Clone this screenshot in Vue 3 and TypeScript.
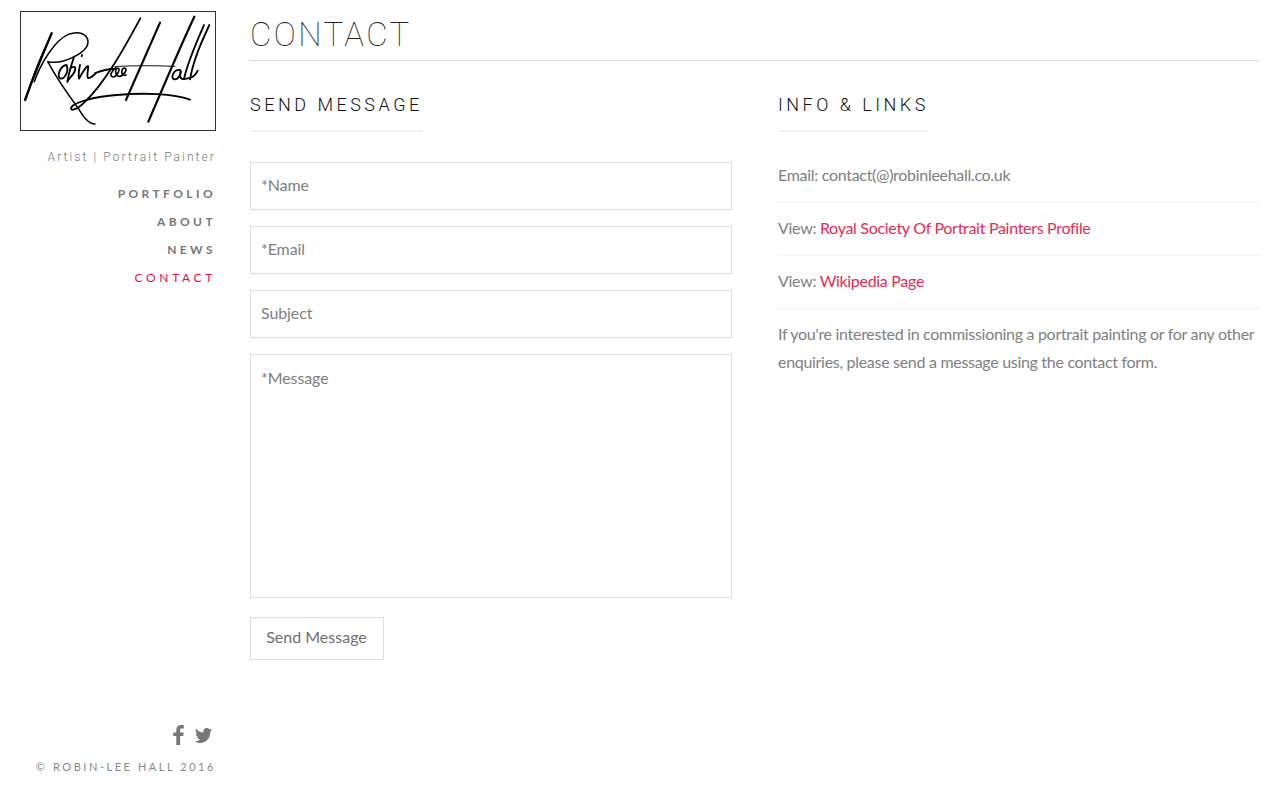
<template>
  <div class="page">
    <aside class="sidebar">
      <div class="logo">
        <svg class="signature" viewBox="63 36 582 354" width="194" height="118" fill="none" stroke="#000" stroke-linecap="round" stroke-linejoin="round">
          <!-- R -->
          <path stroke-width="7" d="M155 100C125 170 95 245 75 300" />
          <path stroke-width="5" d="M135 145C112 195 92 250 78 296" />
          <path stroke-width="4.5" d="M103 245C122 190 165 120 205 103C235 92 262 100 264 125C266 150 225 172 190 183C172 188 155 187 143 185C165 225 205 285 235 325C250 350 265 372 285 372" />
          <!-- obin -->
          <path stroke-width="5.5" d="M200 195C182 196 170 225 180 235C192 240 208 215 200 197M222 170C214 195 205 225 202 246C206 232 225 225 226 205C226 198 214 200 210 208M246 165L245 169M240 195C237 210 234 222 237 236C243 226 256 200 264 198C268 200 258 225 264 234C272 236 280 226 288 219" />
          <!-- dash and lee -->
          <path stroke-width="5.5" d="M286 219C305 212 322 206 342 207" />
          <path stroke-width="5" d="M348 203C334 214 326 230 340 231C352 228 362 208 354 204C342 206 346 231 360 229C372 226 384 208 374 204C362 206 362 230 378 225" />
          <path stroke-width="3.5" stroke="#444" d="M345 200C400 196 470 196 525 199" />
          <!-- L and flourish -->
          <path stroke-width="5.5" d="M421 55C375 140 315 250 250 310C230 330 208 335 214 322C224 304 290 290 350 285C430 278 520 280 570 299" />
          <!-- second stem -->
          <path stroke-width="6.5" d="M480 68L378 300" />
          <!-- H -->
          <path stroke-width="6.5" d="M583 50C545 130 490 260 445 365" />
          <!-- all -->
          <path stroke-width="5.5" d="M612 75C590 125 565 180 552 236M628 75C605 125 580 180 570 238" />
          <path stroke-width="5.5" d="M540 210C522 208 510 232 522 238C535 240 545 220 542 212C538 225 540 240 552 237C564 234 582 238 593 212" />
        </svg>
      </div>
      <p class="tagline">Artist | Portrait Painter</p>
      <nav class="nav">
        <a v-for="item in navItems" :key="item" :class="{ active: item === 'CONTACT' }">{{ item }}</a>
      </nav>
      <div class="sidebar-foot">
        <div class="social">
          <svg width="11" height="20" viewBox="0 0 11 20" fill="#777">
            <path d="M7.1 20V10.9H10.2L10.7 7.4H7.1V5.1C7.1 4.1 7.4 3.4 8.9 3.4H10.8V.2C10.5.2 9.3 0 8 0 5.2 0 3.3 1.7 3.3 4.8V7.4H.2V10.9H3.3V20Z" />
          </svg>
          <svg width="17" height="15" viewBox="0 0 24 20" fill="#777" preserveAspectRatio="none">
            <path d="M24 2.4c-.9.4-1.8.7-2.8.8 1-.6 1.8-1.6 2.2-2.7-1 .6-2 1-3.1 1.2C19.3.7 18 0 16.6 0c-2.7 0-4.9 2.2-4.9 4.9 0 .4 0 .8.1 1.1C7.7 5.8 4.1 3.9 1.7.9 1.3 1.6 1 2.5 1 3.4c0 1.7.9 3.2 2.2 4.1-.8 0-1.6-.2-2.2-.6v.1c0 2.4 1.7 4.4 3.9 4.8-.4.1-.8.2-1.3.2-.3 0-.6 0-.9-.1.6 2 2.4 3.4 4.6 3.4-1.7 1.3-3.8 2.1-6.1 2.1-.4 0-.8 0-1.2-.1C2.2 19.2 4.8 20 7.5 20c9.1 0 14-7.5 14-14v-.6c1-.7 1.8-1.6 2.5-3z" />
          </svg>
        </div>
        <p class="copyright">© ROBIN-LEE HALL 2016</p>
      </div>
    </aside>

    <main class="main">
      <h1 class="page-title">CONTACT</h1>
      <div class="columns">
        <section class="col">
          <h2 class="col-title">SEND MESSAGE</h2>
          <form class="form" @submit.prevent>
            <input v-for="field in fields" :key="field" class="field" type="text" :placeholder="field" />
            <textarea class="field message" placeholder="*Message"></textarea>
            <button class="send" type="submit">Send Message</button>
          </form>
        </section>
        <section class="col">
          <h2 class="col-title">INFO &amp; LINKS</h2>
          <ul class="info">
            <li>Email: contact(@)robinleehall.co.uk</li>
            <li>View: <a>Royal Society Of Portrait Painters Profile</a></li>
            <li>View: <a>Wikipedia Page</a></li>
            <li>If you're interested in commissioning a portrait painting or for any other enquiries, please send a message using the contact form.</li>
          </ul>
        </section>
      </div>
    </main>
  </div>
</template>

<script setup lang="ts">
const navItems: string[] = ['PORTFOLIO', 'ABOUT', 'NEWS', 'CONTACT']
const fields: string[] = ['*Name', '*Email', 'Subject']
</script>

<style>
html,
body {
  background: #fff;
}
</style>

<style scoped>
.page {
  display: flex;
  height: 800px;
  overflow: hidden;
  box-sizing: border-box;
  padding: 0 20px;
  font-family: Lato, "Open Sans", sans-serif;
  color: #777;
}

.sidebar {
  width: 196px;
  flex: none;
  display: flex;
  flex-direction: column;
  align-items: flex-end;
  padding-top: 11px;
  box-sizing: border-box;
  height: 800px;
}

.logo {
  width: 196px;
  height: 120px;
  box-sizing: border-box;
  border: 1px solid #333;
}

.signature {
  display: block;
}

.tagline {
  margin: 18px 0 0;
  font: 300 12px/16px Roboto, sans-serif;
  letter-spacing: 2.1px;
  color: #777;
}

.nav {
  display: flex;
  flex-direction: column;
  align-items: flex-end;
  margin-top: 15px;
}

.nav a {
  font: 700 12px/28px Lato, sans-serif;
  letter-spacing: 3.4px;
  color: #777;
}

.nav a.active {
  font-weight: 400;
  letter-spacing: 3.65px;
  color: #e8103f;
}

.sidebar-foot {
  margin-top: auto;
  padding-bottom: 26px;
  display: flex;
  flex-direction: column;
  align-items: flex-end;
}

.social {
  display: flex;
  align-items: center;
  gap: 11px;
  padding-right: 4px;
}

.copyright {
  margin: 15px 0 0;
  font: 400 11px/14px Lato, sans-serif;
  letter-spacing: 2.55px;
  color: #888;
}

.main {
  flex: 1;
  min-width: 0;
  margin-left: 34px;
}

.page-title {
  margin: 0;
  height: 48px;
  padding-top: 12px;
  border-bottom: 1px solid #ddd;
  font: 100 33px/46px Roboto, sans-serif;
  letter-spacing: 2.4px;
  color: #222;
}

.columns {
  display: grid;
  grid-template-columns: 482px 482px;
  column-gap: 46px;
  margin-top: 32px;
}

.col-title {
  display: inline-block;
  margin: 0;
  padding-bottom: 13px;
  border-bottom: 2px solid #f3f3f3;
  font: 300 18px/24px Roboto, sans-serif;
  letter-spacing: 3.5px;
  color: #111;
}

.form {
  display: flex;
  flex-direction: column;
  align-items: flex-start;
  gap: 16px;
  margin-top: 30px;
}

.field {
  display: block;
  width: 482px;
  height: 48px;
  box-sizing: border-box;
  border: 1px solid #ddd;
  border-radius: 0;
  padding: 0 10px 4px;
  background: #fff;
  outline: none;
  font: 400 16px/24px Lato, sans-serif;
  letter-spacing: -0.1px;
  color: #808080;
  resize: none;
}

.field::placeholder {
  color: #808080;
  opacity: 1;
}

.message {
  height: 244px;
  padding-top: 11px;
}

.send {
  margin-top: 3px;
  width: 134px;
  height: 43px;
  border: 1px solid #ddd;
  background: #fff;
  padding: 0 1px 4px 0;
  font: 400 16px/24px Lato, sans-serif;
  color: #707070;
}

.info {
  list-style: none;
  margin: 18px 0 0;
  padding: 0;
  font: 400 16px/28px Lato, sans-serif;
  letter-spacing: -0.3px;
  color: #808080;
}

.info li {
  padding: 11px 0 13px;
  border-bottom: 1px solid #f3f3f3;
}

.info li:last-child {
  border-bottom: 0;
}

.info a {
  color: #ea2a52;
}
</style>
